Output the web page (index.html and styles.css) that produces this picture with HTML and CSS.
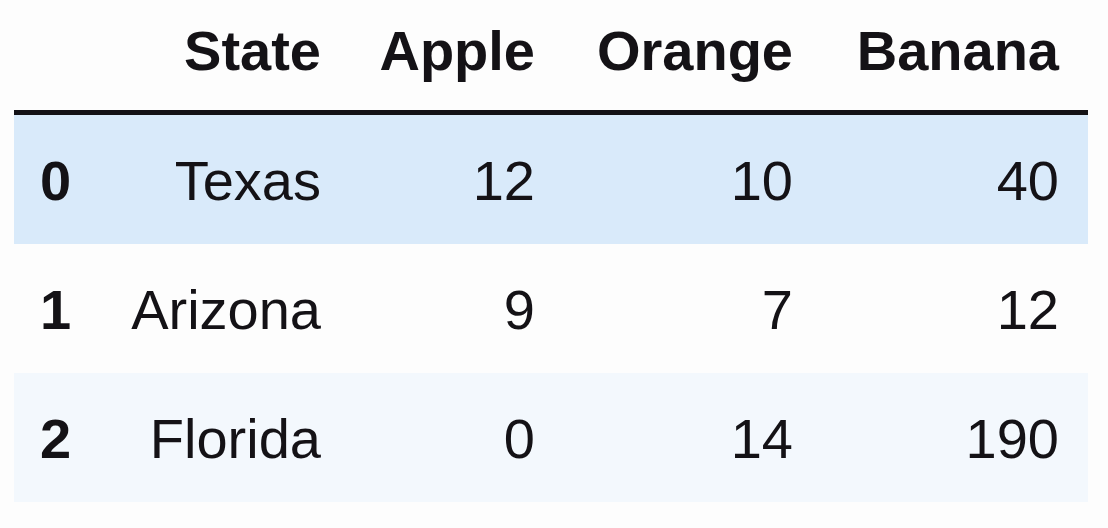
FILE: index.html
```html
<!DOCTYPE html>
<html lang="en">
<head>
<meta charset="utf-8">
<title>DataFrame</title>
<link rel="stylesheet" href="styles.css">
</head>
<body>
<table class="df">
  <colgroup>
    <col class="c-idx">
    <col class="c-state">
    <col class="c-apple">
    <col class="c-orange">
    <col class="c-banana">
  </colgroup>
  <thead>
    <tr>
      <th></th>
      <th>State</th>
      <th>Apple</th>
      <th>Orange</th>
      <th>Banana</th>
    </tr>
  </thead>
  <tbody>
    <tr class="row-hover">
      <th>0</th>
      <td>Texas</td>
      <td>12</td>
      <td>10</td>
      <td>40</td>
    </tr>
    <tr>
      <th>1</th>
      <td>Arizona</td>
      <td>9</td>
      <td>7</td>
      <td>12</td>
    </tr>
    <tr class="row-striped">
      <th>2</th>
      <td>Florida</td>
      <td>0</td>
      <td>14</td>
      <td>190</td>
    </tr>
  </tbody>
</table>
</body>
</html>
```

FILE: styles.css
```css
html, body {
  margin: 0;
  padding: 0;
  background: #fdfdfd;
}

body {
  font-family: "Liberation Sans", Arial, sans-serif;
  color: #141216;
}

.df {
  margin-left: 14px;
  width: 1074px;
  table-layout: fixed;
  border-collapse: collapse;
  border-spacing: 0;
  font-size: 56px;
  line-height: 64px;
}

.c-idx { width: 87px; }
.c-state { width: 249px; }
.c-apple { width: 214px; }
.c-orange { width: 258px; }
.c-banana { width: 266px; }

.df th,
.df td {
  padding: 34px 29px 31px;
  text-align: right;
  vertical-align: middle;
  white-space: nowrap;
}

.df th {
  font-weight: bold;
}

.df thead th {
  padding-top: 19px;
  padding-bottom: 27px;
  border-bottom: 5px solid #141216;
}

.df td {
  font-weight: normal;
}

.df tbody th {
  padding-left: 26px;
  padding-right: 0;
  text-align: left;
}

.row-hover {
  background: #d9eafa;
}

.row-striped {
  background: #f3f8fd;
}
```
